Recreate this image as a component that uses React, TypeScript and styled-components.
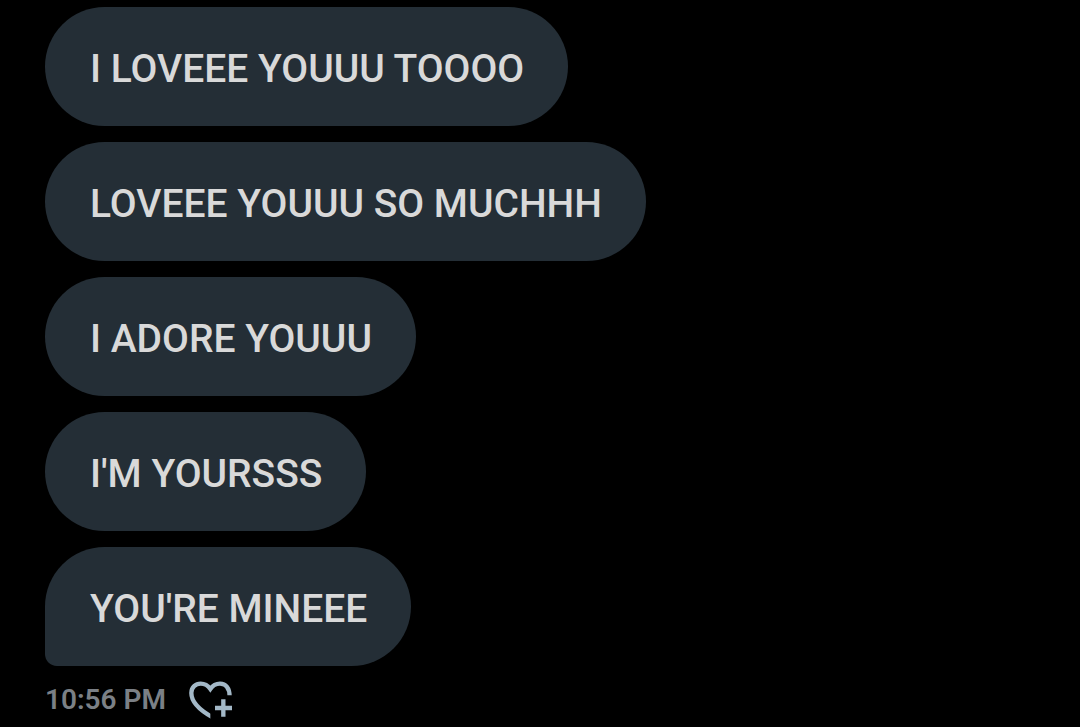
import React from 'react';
import styled, { createGlobalStyle } from 'styled-components';

const GlobalStyle = createGlobalStyle`
  *, *::before, *::after { box-sizing: border-box; }
  body {
    margin: 0;
    background: #000;
    font-family: Roboto, "Liberation Sans", sans-serif;
  }
`;

const Conversation = styled.main`
  padding: 7px 45px 0;
`;

const MessageList = styled.ul`
  display: flex;
  flex-direction: column;
  align-items: flex-start;
  gap: 16px;
  margin: 0;
  padding: 0;
  list-style: none;
`;

const Bubble = styled.li<{ $last?: boolean }>`
  padding: 38px 44px 33px 45px;
  border-radius: 60px;
  border-bottom-left-radius: ${({ $last }) => ($last ? '12px' : '60px')};
  background: #242e36;
  color: #d9d9d9;
  font-size: 39px;
  font-weight: 500;
  line-height: 48px;
`;

const Meta = styled.footer`
  display: flex;
  align-items: center;
  gap: 23px;
  padding-top: 14px;
`;

const Time = styled.time`
  color: #7b8086;
  font-size: 28px;
  font-weight: 600;
  line-height: 40px;
`;

const ReactButton = styled.button`
  display: flex;
  padding: 0;
  border: 0;
  background: none;
  color: #a3b8c7;
  cursor: pointer;
`;

const messages = [
  'I LOVEEE YOUUU TOOOO',
  'LOVEEE YOUUU SO MUCHHH',
  'I ADORE YOUUU',
  "I'M YOURSSS",
  "YOU'RE MINEEE",
];

const HeartPlus = () => (
  <svg width="44" height="39" viewBox="27 33 132 117" fill="none" stroke="currentColor" strokeWidth="13" aria-hidden="true">
    <clipPath id="heart-edge">
      <path d="M20 20H170V76H91V160H20Z" />
    </clipPath>
    <path
      clipPath="url(#heart-edge)"
      d="M98 142C58 120 34 98 34 69C34 51 47 41 62 41C74 41 84 47 91 57C98 47 108 41 120 41C137 41 149 53 149 80"
    />
    <path d="M105 114H156M130 88V140" />
  </svg>
);

export default function App() {
  return (
    <>
      <GlobalStyle />
      <Conversation>
        <MessageList>
          {messages.map((text, i) => (
            <Bubble key={text} $last={i === messages.length - 1}>{text}</Bubble>
          ))}
        </MessageList>
        <Meta>
          <Time dateTime="22:56">10:56 PM</Time>
          <ReactButton type="button" aria-label="Add reaction">
            <HeartPlus />
          </ReactButton>
        </Meta>
      </Conversation>
    </>
  );
}
